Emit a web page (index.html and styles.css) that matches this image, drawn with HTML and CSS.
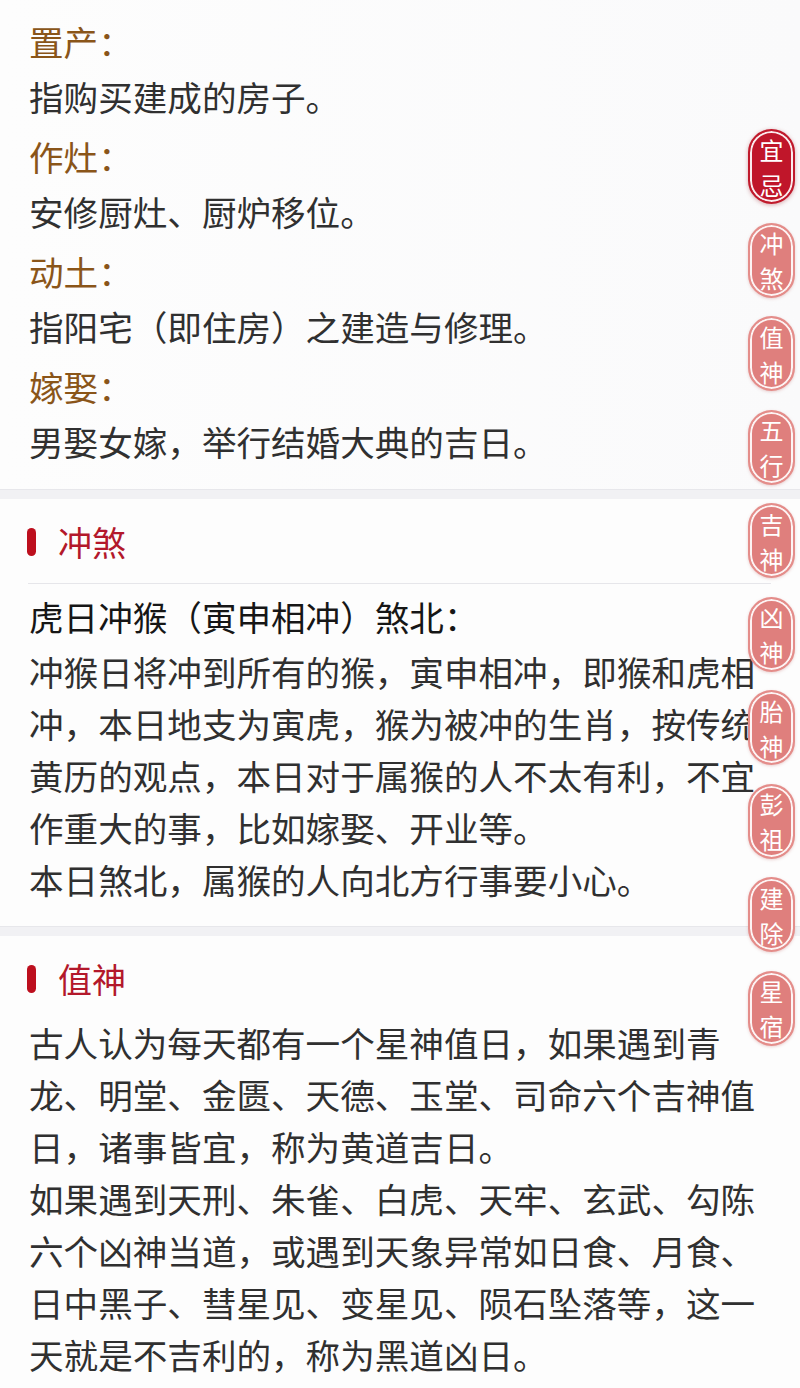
FILE: index.html
```html
<!DOCTYPE html>
<html lang="zh-CN">
<head>
<meta charset="utf-8">
<title>黄历</title>
<link rel="stylesheet" href="styles.css">
</head>
<body>
<div class="page">
  <section class="block block-first">
    <div class="item">
      <div class="label">置产：</div>
      <div class="desc">指购买建成的房子。</div>
    </div>
    <div class="item">
      <div class="label">作灶：</div>
      <div class="desc">安修厨灶、厨炉移位。</div>
    </div>
    <div class="item">
      <div class="label">动土：</div>
      <div class="desc">指阳宅（即住房）之建造与修理。</div>
    </div>
    <div class="item">
      <div class="label">嫁娶：</div>
      <div class="desc">男娶女嫁，举行结婚大典的吉日。</div>
    </div>
  </section>
  <div class="band"></div>
  <section class="block">
    <h2 class="head"><span class="mark"></span>冲煞</h2>
    <div class="rule"></div>
    <p class="lead">虎日冲猴（寅申相冲）煞北：</p>
    <p class="text">冲猴日将冲到所有的猴，寅申相冲，即猴和虎相冲，本日地支为寅虎，猴为被冲的生肖，按传统黄历的观点，本日对于属猴的人不太有利，不宜作重大的事，比如嫁娶、开业等。</p>
    <p class="text">本日煞北，属猴的人向北方行事要小心。</p>
  </section>
  <div class="band"></div>
  <section class="block">
    <h2 class="head head-gap"><span class="mark"></span>值神</h2>
    <p class="text">古人认为每天都有一个星神值日，如果遇到青龙、明堂、金匮、天德、玉堂、司命六个吉神值日，诸事皆宜，称为黄道吉日。</p>
    <p class="text">如果遇到天刑、朱雀、白虎、天牢、玄武、勾陈六个凶神当道，或遇到天象异常如日食、月食、日中黑子、彗星见、变星见、陨石坠落等，这一天就是不吉利的，称为黑道凶日。</p>
  </section>
</div>
<nav class="tabs">
  <a class="tab tab-active"><span class="ch">宜</span><span class="ch">忌</span></a>
  <a class="tab"><span class="ch">冲</span><span class="ch">煞</span></a>
  <a class="tab"><span class="ch">值</span><span class="ch">神</span></a>
  <a class="tab"><span class="ch">五</span><span class="ch">行</span></a>
  <a class="tab"><span class="ch">吉</span><span class="ch">神</span></a>
  <a class="tab"><span class="ch">凶</span><span class="ch">神</span></a>
  <a class="tab"><span class="ch">胎</span><span class="ch">神</span></a>
  <a class="tab"><span class="ch">彭</span><span class="ch">祖</span></a>
  <a class="tab"><span class="ch">建</span><span class="ch">除</span></a>
  <a class="tab"><span class="ch">星</span><span class="ch">宿</span></a>
</nav>
</body>
</html>
```
FILE: styles.css
```css
* { box-sizing: border-box; }
html, body {
  margin: 0;
  padding: 0;
  background: #fcfcfd;
}
body {
  font-family: "Noto Sans CJK SC", "Noto Sans", sans-serif;
  font-size: 34.6px;
  color: #303030;
  width: 800px;
  height: 1388px;
  overflow: hidden;
  position: relative;
}
.page {
  display: flex;
  flex-direction: column;
}
.block {
  padding: 18px 29px 21px 29px;
  background: #fdfdfd;
}
.block-first {
  padding-top: 14px;
  padding-bottom: 20px;
  background: linear-gradient(90deg, #fdfdfd 0%, #fafafb 100%);
}
.item {
  margin-bottom: 5px;
}
.item:last-child { margin-bottom: 0; }
.label {
  line-height: 55px;
  color: #8a5519;
}
.desc {
  line-height: 55px;
  color: #303030;
}
.band {
  height: 10px;
  background: #f1f1f4;
  border-top: 1px solid #e7e7eb;
}
.head {
  margin: 0;
  font-weight: normal;
  font-size: 34px;
  line-height: 50px;
  color: #b3182b;
  display: flex;
  align-items: center;
}
.mark {
  display: inline-block;
  width: 9px;
  height: 28px;
  border-radius: 5px;
  background: #bd0f1e;
  margin-left: -2px;
  margin-right: 22px;
}
.head-gap {
  margin-bottom: 12px;
}
.rule {
  height: 1px;
  background: #e6e6ea;
  margin: 16px 0 6px -1px;
}
.lead {
  margin: 0 0 3px 0;
  line-height: 52px;
  color: #161616;
}
.text {
  margin: 0;
  line-height: 52px;
  color: #303030;
}
.tabs {
  position: absolute;
  top: 129px;
  right: 5px;
  display: flex;
  flex-direction: column;
  gap: 18.5px;
}
.tab {
  width: 47px;
  height: 75px;
  border-radius: 24px;
  border: 2px solid #e48d8a;
  background: #df7f7d;
  box-shadow: inset 0 0 0 2px #fdf4f4, 0 1px 3px rgba(180, 80, 80, 0.25);
  color: #ffffff;
  font-size: 24px;
  display: flex;
  flex-direction: column;
  align-items: center;
  justify-content: center;
}
.ch {
  display: block;
  line-height: 35px;
  height: 35px;
}
.tab-active {
  border-color: #c01a2c;
  background: #c0162a;
  box-shadow: inset 0 0 0 2px #fbecee, 0 1px 4px rgba(150, 20, 30, 0.35);
}
```
